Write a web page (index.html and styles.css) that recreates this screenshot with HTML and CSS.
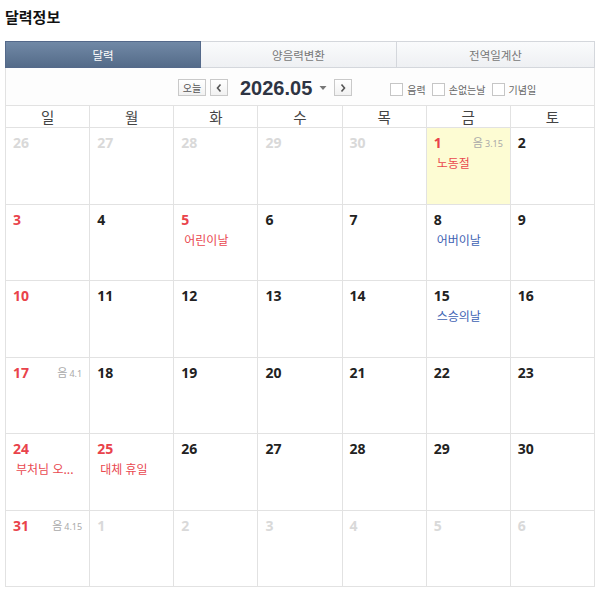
FILE: index.html
```html
<!DOCTYPE html>
<html lang="ko">
<head>
<meta charset="utf-8">
<link rel="stylesheet" href="styles.css">
</head>
<body>
<h2 class="title">달력정보</h2>
<div class="cal">
  <div class="tabs">
    <div class="tab active">달력</div>
    <div class="tab">양음력변환</div>
    <div class="tab">전역일계산</div>
  </div>
  <div class="toolbar">
    <div class="nav">
      <span class="btn today">오늘</span>
      <span class="btn arrow"><svg width="8" height="10" viewBox="0 0 8 10"><path d="M5.5 1.5 L2.5 5 L5.5 8.5" fill="none" stroke="#555" stroke-width="1.6"/></svg></span>
      <span class="month">2026.05</span>
      <span class="caret"><svg width="8" height="6" viewBox="0 0 8 6"><path d="M0.5 1 L7.5 1 L4 5 Z" fill="#777"/></svg></span>
      <span class="btn arrow next"><svg width="8" height="10" viewBox="0 0 8 10"><path d="M2.5 1.5 L5.5 5 L2.5 8.5" fill="none" stroke="#555" stroke-width="1.6"/></svg></span>
    </div>
    <div class="checks">
      <label class="chk"><span class="box"></span>음력</label>
      <label class="chk"><span class="box"></span>손없는날</label>
      <label class="chk"><span class="box"></span>기념일</label>
    </div>
  </div>
  <div class="week">
    <div>일</div><div>월</div><div>화</div><div>수</div><div>목</div><div>금</div><div>토</div>
  </div>
  <div class="days">
    <div class="cell"><span class="num dim">26</span></div>
    <div class="cell"><span class="num dim">27</span></div>
    <div class="cell"><span class="num dim">28</span></div>
    <div class="cell"><span class="num dim">29</span></div>
    <div class="cell"><span class="num dim">30</span></div>
    <div class="cell today-cell"><span class="num red">1</span><span class="lunar"><b>음</b>3.15</span><span class="ev red">노동절</span></div>
    <div class="cell"><span class="num">2</span></div>

    <div class="cell"><span class="num red">3</span></div>
    <div class="cell"><span class="num">4</span></div>
    <div class="cell"><span class="num red">5</span><span class="ev red">어린이날</span></div>
    <div class="cell"><span class="num">6</span></div>
    <div class="cell"><span class="num">7</span></div>
    <div class="cell"><span class="num">8</span><span class="ev blue">어버이날</span></div>
    <div class="cell"><span class="num">9</span></div>

    <div class="cell"><span class="num red">10</span></div>
    <div class="cell"><span class="num">11</span></div>
    <div class="cell"><span class="num">12</span></div>
    <div class="cell"><span class="num">13</span></div>
    <div class="cell"><span class="num">14</span></div>
    <div class="cell"><span class="num">15</span><span class="ev blue">스승의날</span></div>
    <div class="cell"><span class="num">16</span></div>

    <div class="cell"><span class="num red">17</span><span class="lunar"><b>음</b>4.1</span></div>
    <div class="cell"><span class="num">18</span></div>
    <div class="cell"><span class="num">19</span></div>
    <div class="cell"><span class="num">20</span></div>
    <div class="cell"><span class="num">21</span></div>
    <div class="cell"><span class="num">22</span></div>
    <div class="cell"><span class="num">23</span></div>

    <div class="cell"><span class="num red">24</span><span class="ev red">부처님 오...</span></div>
    <div class="cell"><span class="num red">25</span><span class="ev red">대체 휴일</span></div>
    <div class="cell"><span class="num">26</span></div>
    <div class="cell"><span class="num">27</span></div>
    <div class="cell"><span class="num">28</span></div>
    <div class="cell"><span class="num">29</span></div>
    <div class="cell"><span class="num">30</span></div>

    <div class="cell"><span class="num red">31</span><span class="lunar"><b>음</b>4.15</span></div>
    <div class="cell"><span class="num dim">1</span></div>
    <div class="cell"><span class="num dim">2</span></div>
    <div class="cell"><span class="num dim">3</span></div>
    <div class="cell"><span class="num dim">4</span></div>
    <div class="cell"><span class="num dim">5</span></div>
    <div class="cell"><span class="num dim">6</span></div>
  </div>
</div>
</body>
</html>
```
FILE: styles.css
```css
* { box-sizing: border-box; }
body {
  margin: 0;
  background: #fff;
  font-family: "Noto Sans", "Noto Sans CJK KR", sans-serif;
  color: #222;
}
.title {
  margin: 0;
  padding: 7px 0 0 5px;
  height: 41px;
  font-size: 15px;
  line-height: 20px;
  font-weight: 700;
  color: #111;
  font-family: "Noto Sans CJK KR", sans-serif;
}
.cal {
  margin: 0 5px;
  width: 590px;
}
.tabs {
  display: grid;
  grid-template-columns: 196px 196px 198px;
  height: 27px;
}
.tab {
  display: flex;
  align-items: center;
  justify-content: center;
  font-size: 11.5px;
  color: #777;
  font-family: "Noto Sans CJK KR", sans-serif;
  background: linear-gradient(#fafbfc, #eef0f3);
  border: 1px solid #d4d7dc;
  border-left: none;
}
.tab:first-child { border-left: 1px solid #d4d7dc; }
.tab.active {
  background: linear-gradient(#7189a6, #546b89);
  color: #fff;
  border-color: #54698a;
}
.toolbar {
  height: 38px;
  display: flex;
  align-items: center;
  padding: 2px 0 0 172px;
  border-left: 1px solid #e2e2e2;
  border-right: 1px solid #e2e2e2;
  border-bottom: 1px solid #e2e2e2;
  background: #fdfdfd;
}
.nav {
  display: flex;
  align-items: center;
}
.btn {
  display: flex;
  align-items: center;
  justify-content: center;
  height: 17px;
  border: 1px solid #c9c9c9;
  background: linear-gradient(#fff, #f1f1f1);
  font-size: 10px;
  color: #555;
  font-family: "Noto Sans CJK KR", sans-serif;
}
.today { width: 28px; }
.arrow { width: 18px; margin-left: 4px; }
.arrow.next { margin-left: 7px; }
.month {
  margin-left: 12px;
  color: #2e3443;
  line-height: 20px;
  font-family: "Liberation Sans", "Noto Sans", sans-serif;
  font-weight: 700;
  font-size: 20px;
}
.caret { margin-left: 7px; display: flex; }
.checks {
  display: flex;
  align-items: center;
  margin-left: 38px;
  margin-top: 4px;
}
.chk {
  display: flex;
  align-items: center;
  font-size: 10px;
  color: #666;
  margin-right: 6px;
  font-family: "Noto Sans CJK KR", sans-serif;
}
.box {
  width: 13px;
  height: 13px;
  border: 1px solid #c6c6c6;
  background: #fff;
  margin-right: 4px;
}
.week {
  display: grid;
  grid-template-columns: repeat(7, 1fr);
  height: 22px;
  border-left: 1px solid #e2e2e2;
  border-bottom: 1px solid #e2e2e2;
}
.week div {
  display: flex;
  align-items: center;
  justify-content: center;
  font-size: 14.5px;
  color: #444;
  border-right: 1px solid #e2e2e2;
  font-family: "Noto Sans CJK KR", sans-serif;
}
.days {
  display: grid;
  grid-template-columns: repeat(7, 1fr);
  grid-auto-rows: 76.5px;
  border-left: 1px solid #e2e2e2;
}
.cell {
  position: relative;
  border-right: 1px solid #e2e2e2;
  border-bottom: 1px solid #e2e2e2;
  padding: 7px 6px 0 7px;
  display: flex;
  flex-direction: column;
  align-items: flex-start;
}
.today-cell { background: #fdfcd3; }
.num {
  font-size: 14px;
  font-weight: 700;
  line-height: 16px;
  color: #222;
}
.num.red { color: #e9434b; }
.num.dim { color: #d9d9d9; }
.ev {
  margin-top: 4px;
  margin-left: 3px;
  font-size: 12px;
  line-height: 16px;
  font-family: "Noto Sans CJK KR", sans-serif;
}
.ev.red { color: #e9484f; }
.ev.blue { color: #3e62b3; }
.lunar {
  position: absolute;
  top: 8px;
  right: 7px;
  font-size: 9px;
  color: #a9a9a9;
  line-height: 12px;
}
.lunar b {
  font-weight: 400;
  font-size: 11px;
  margin-right: 2px;
  font-family: "Noto Sans CJK KR", sans-serif;
}
```
